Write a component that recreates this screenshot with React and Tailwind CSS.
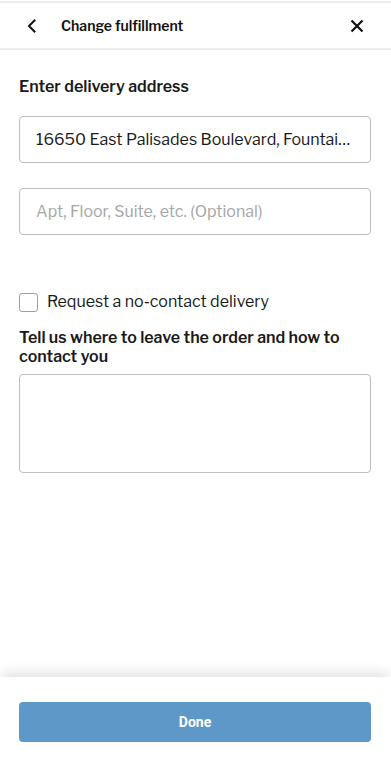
import React from "react";

export default function App() {
  return (
    <div
      className="w-[391px] h-[758px] bg-white flex flex-col text-[#1a1a1a]"
      style={{ fontFamily: "'Libre Franklin', Inter, 'Liberation Sans', sans-serif" }}
    >
      <div className="h-px bg-white" />
      <header className="h-[49px] border-t-2 border-b-2 border-[#ececec] flex items-center">
        <button className="w-[61px] h-full flex items-center pl-[25px]">
          <svg width="14" height="14" viewBox="0 0 14 14" fill="none">
            <path d="M9.5 1.5 L4 7 L9.5 12.5" stroke="#111" strokeWidth="2" strokeLinecap="square" />
          </svg>
        </button>
        <div className="flex-1 text-[14px] font-semibold text-[#111]">Change fulfillment</div>
        <button className="w-[68px] h-full flex items-center justify-center">
          <svg width="14" height="14" viewBox="0 0 14 14" fill="none">
            <path d="M1.5 1.5 L12.5 12.5 M12.5 1.5 L1.5 12.5" stroke="#111" strokeWidth="2.2" />
          </svg>
        </button>
      </header>

      <main className="flex-1 pl-[19px] pr-[20px] pt-[27px] flex flex-col">
        <div className="text-[16px] leading-[20px] font-semibold">Enter delivery address</div>
        <div className="mt-[19px] h-[47px] border border-[#bdbdbd] rounded-[4px] flex items-center px-[16px] text-[16px] text-[#1a1a1a] overflow-hidden">
          <span className="truncate">16650 East Palisades Boulevard, Fountain Hills, AZ</span>
        </div>
        <div className="mt-[25px] h-[47px] border border-[#bdbdbd] rounded-[4px] flex items-center px-[16px] text-[16px] text-[#a6a6a6]">
          Apt, Floor, Suite, etc. (Optional)
        </div>

        <div className="mt-[57px] flex items-center gap-[9px]">
          <div className="w-[19px] h-[19px] border border-[#9e9e9e] rounded-[3px]" />
          <span className="text-[16px] leading-[20px] text-[#1a1a1a]">Request a no-contact delivery</span>
        </div>
        <div className="mt-[16px] text-[16px] leading-[19px] font-semibold">
          Tell us where to leave the order and how to contact you
        </div>
        <div className="mt-[8px] h-[99px] border border-[#bdbdbd] rounded-[4px]" />
      </main>

      <footer className="h-[81px] pl-[19px] pr-[20px] pt-[25px] shadow-[0_-6px_12px_-2px_rgba(0,0,0,0.12)]">
        <button
          className="w-full h-[40px] rounded-[4px] bg-[#5e98c9] text-white text-[14px] font-bold"
          style={{ fontFamily: "Roboto, 'Liberation Sans', sans-serif" }}
        >
          Done
        </button>
      </footer>
    </div>
  );
}
